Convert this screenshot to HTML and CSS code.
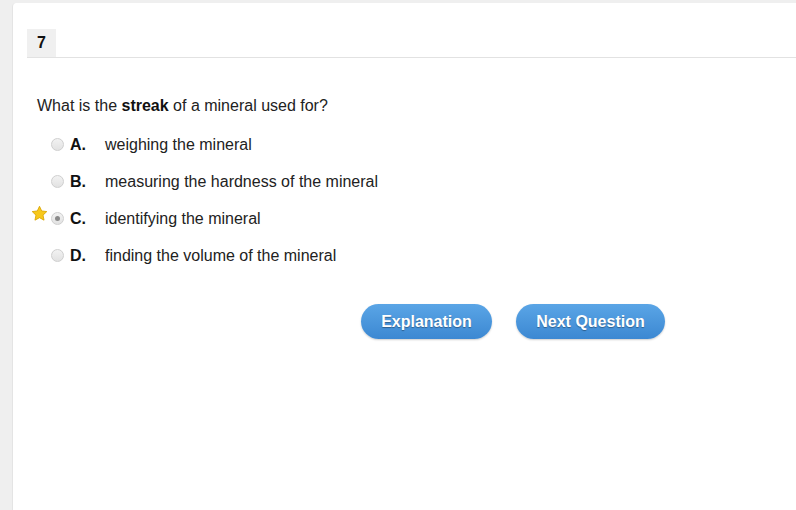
FILE: index.html
```html
<!DOCTYPE html>
<html lang="en">
<head>
  <meta charset="UTF-8">
  <title>Question 7</title>
  <link rel="stylesheet" href="styles.css">
</head>
<body>

  <div class="painel">
    <div class="cabecalho">
      <span class="numero">7</span>
    </div>

    <p class="pergunta">What is the <strong>streak</strong> of a mineral used for?</p>

    <ul class="opcoes">
      <li>
        <span class="marca"></span>
        <span class="radio"></span>
        <span class="letra">A.</span>
        <span class="texto">weighing the mineral</span>
      </li>
      <li>
        <span class="marca"></span>
        <span class="radio"></span>
        <span class="letra">B.</span>
        <span class="texto">measuring the hardness of the mineral</span>
      </li>
      <li>
        <span class="marca">
          <svg width="17" height="17" viewBox="0 0 24 24">
            <path d="M12 1.8l3.1 6.6 7.2.9-5.3 5 1.4 7.1L12 17.9l-6.4 3.5 1.4-7.1-5.3-5 7.2-.9z" fill="#f7c81c" stroke="#d9a400" stroke-width="1.2" stroke-linejoin="round"/>
          </svg>
        </span>
        <span class="radio marcado"></span>
        <span class="letra">C.</span>
        <span class="texto">identifying the mineral</span>
      </li>
      <li>
        <span class="marca"></span>
        <span class="radio"></span>
        <span class="letra">D.</span>
        <span class="texto">finding the volume of the mineral</span>
      </li>
    </ul>

    <div class="botoes">
      <button class="botao explicacao">Explanation</button>
      <button class="botao proxima">Next Question</button>
    </div>
  </div>

</body>
</html>
```

FILE: styles.css
```css
body {
  margin: 0;
  background-color: #efefef;
  font-family: "Liberation Sans", Arial, sans-serif;
  color: #222;
}

.painel {
  margin: 3px 0 0 12px;
  background-color: #fff;
  border-top-left-radius: 4px;
  min-height: 507px;
  padding-left: 14px;
  border-left: 1px solid #e4e4e4;
  box-sizing: border-box;
}

.cabecalho {
  padding-top: 26px;
  border-bottom: 1px solid #e2e2e2;
}

.numero {
  display: inline-block;
  width: 29px;
  height: 28px;
  line-height: 28px;
  text-align: center;
  background-color: #f0f0f0;
  font-weight: bold;
  font-size: 16px;
  color: #111;
}

.pergunta {
  margin: 39px 0 0 10px;
  font-size: 16px;
  line-height: 18px;
}

.pergunta strong {
  color: #111;
}

.opcoes {
  list-style: none;
  margin: 11px 0 0 0;
  padding: 0;
}

.opcoes li {
  display: flex;
  align-items: center;
  height: 37px;
  font-size: 16px;
}

.marca {
  width: 24px;
  display: flex;
  justify-content: flex-end;
  margin-top: -10px;
}

.marca svg {
  display: block;
  margin-right: 3px;
}

.radio {
  width: 11px;
  height: 11px;
  border-radius: 50%;
  border: 1px solid #cfcfcf;
  background: linear-gradient(#f2f2f2, #e2e2e2);
  position: relative;
}

.radio.marcado::after {
  content: "";
  position: absolute;
  left: 3px;
  top: 3px;
  width: 5px;
  height: 5px;
  border-radius: 50%;
  background-color: #8a8a8a;
}

.letra {
  font-weight: bold;
  color: #111;
  width: 35px;
  margin-left: 6px;
}

.texto {
  color: #222;
}

.botoes {
  display: flex;
  gap: 24px;
  margin: 30px 0 0 334px;
}

.botao {
  height: 35px;
  padding: 0 19px;
  border: none;
  border-radius: 18px;
  background: linear-gradient(#5aa5e6, #3c88d2);
  color: #fff;
  font-family: "Liberation Sans", Arial, sans-serif;
  font-weight: bold;
  font-size: 16px;
  text-shadow: 0 1px 1px rgba(0, 0, 0, 0.35);
  box-shadow: 0 1px 2px rgba(0, 0, 0, 0.2);
  cursor: pointer;
}

.botao.explicacao {
  width: 131px;
}

.botao.proxima {
  width: 149px;
}
```
